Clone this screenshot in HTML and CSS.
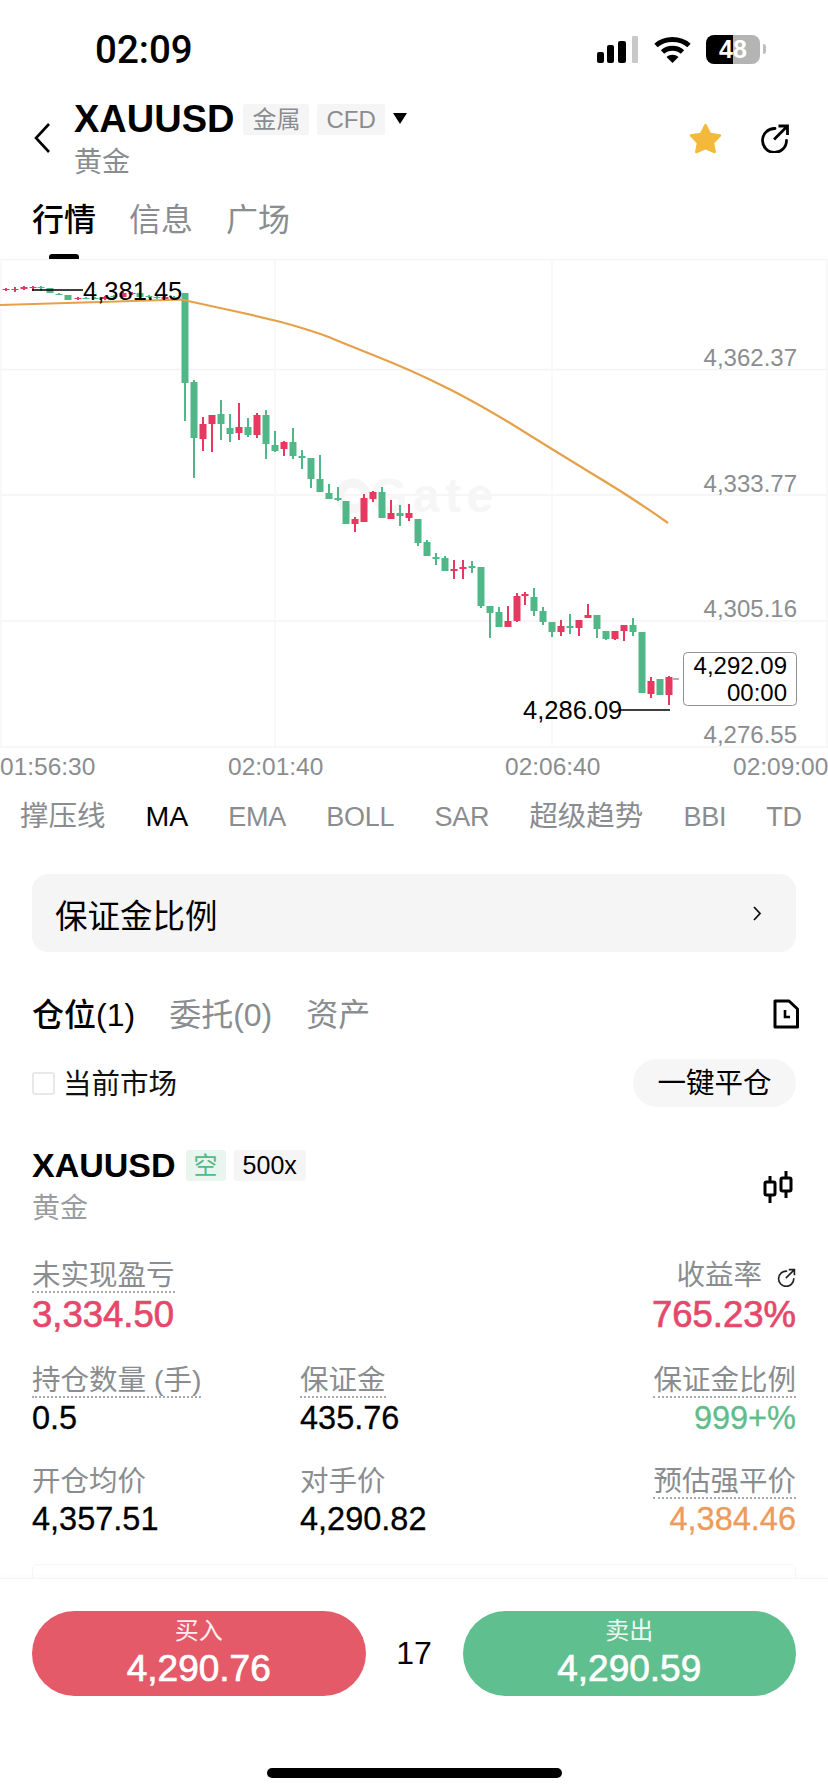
FILE: index.html
```html
<!DOCTYPE html>
<html lang="zh-CN">
<head>
    <meta charset="UTF-8">
    <meta name="viewport" content="width=device-width, initial-scale=1.0">
    <title>XAUUSD</title>
    <link rel="stylesheet" href="styles.css">
</head>
<body>
    <div class="main">
        <!-- Status bar -->
        <div class="status">
            <span class="time">02:09</span>
            <div class="status-icons">
                <svg width="42" height="27" viewBox="0 0 42 27">
                    <rect x="0" y="16" width="7" height="11" rx="2" fill="#000"/>
                    <rect x="10" y="9" width="7" height="18" rx="2" fill="#000"/>
                    <rect x="21" y="5" width="8" height="22" rx="2" fill="#000"/>
                    <rect x="35" y="0" width="6" height="27" rx="1" fill="#c9c9c9"/>
                </svg>
                <svg class="wifi" width="37" height="27" viewBox="0 0 37 27">
                    <path d="M2 9.5 C11 1.5 26 1.5 35 9.5" fill="none" stroke="#000" stroke-width="5"/>
                    <path d="M8.5 16 C14 11 23 11 28.5 16" fill="none" stroke="#000" stroke-width="5"/>
                    <path d="M12.5 21 C16 18 21 18 24.5 21 L18.5 27 Z" fill="#000"/>
                </svg>
                <div class="battery"><span>48</span></div>
                <span class="battery-nub"></span>
            </div>
        </div>

        <!-- Symbol header -->
        <div class="head">
            <svg class="back" width="16" height="30" viewBox="0 0 16 30">
                <path d="M15 1 L2 15 L15 29" fill="none" stroke="#000" stroke-width="2.6"/>
            </svg>
            <div class="head-title">
                <div class="head-row">
                    <span class="symbol">XAUUSD</span>
                    <span class="tag">金属</span>
                    <span class="tag">CFD</span>
                    <svg class="caret" width="14" height="11" viewBox="0 0 14 11"><path d="M0 0 H14 L7 11 Z" fill="#000"/></svg>
                </div>
                <div class="head-sub">黄金</div>
            </div>
            <svg class="star" width="33" height="31" viewBox="0 0 33 31">
                <path d="M16.5 2 L21 11 L31 12.5 L24 20 L25.7 29 L16.5 25 L7.3 29 L9 20 L2 12.5 L12 11 Z" fill="#f4b93a" stroke="#f4b93a" stroke-width="2.5" stroke-linejoin="round"/>
            </svg>
            <svg class="share" width="30" height="29" viewBox="0 0 30 29">
                <path d="M15 4.5 A12 12 0 1 0 26.5 16.5" fill="none" stroke="#000" stroke-width="2.8" stroke-linecap="round"/>
                <path d="M14 15.5 L27 2.5 M18.5 2 H27.5 V11" fill="none" stroke="#000" stroke-width="2.8"/>
            </svg>
        </div>

        <!-- Page tabs -->
        <div class="tabs">
            <div class="tab-row">
                <span class="tab-on">行情</span>
                <span>信息</span>
                <span>广场</span>
            </div>
            <div class="tab-mark"></div>
        </div>

        <!-- Chart: viewBox keeps the page's y values -->
        <svg class="chart" id="chart" width="828" height="527" viewBox="0 259 828 527">
            <g stroke="#f3f3f3" stroke-width="1.5">
                <path d="M0 259.5 H828 M0 369.5 H828 M0 495 H828 M0 621 H828 M0 747 H828"/>
            </g>
            <path d="M1 259 V747 M275 259 V747 M552 259 V747 M827 259 V747" stroke="#f8f8f8" stroke-width="1.5"/>
            <g class="watermark">
                <circle cx="353" cy="496" r="13" fill="none" stroke="#f5f5f5" stroke-width="9"/>
                <text x="370" y="512">Gate</text>
            </g>
            <g id="candles"></g>
            <path d="M0 305 L100 302 L182 299.5 L188 301 L220 308 Q253 315 281 322 Q310 330 326 336 Q343 343 378 357 Q413 371 441 385 Q470 399 510 423 Q550 448 591 473 Q633 498 668 523" fill="none" stroke="#e5a14a" stroke-width="2.2" stroke-linejoin="round"/>
            <path d="M32 290 H83 M619 710 H670" stroke="#000" stroke-width="1.5"/>
            <path d="M673 679 H679" stroke="#999" stroke-width="1.5"/>
            <text class="mark big-mark" x="83" y="300">4,381.45</text>
            <text class="mark big-mark" x="523" y="719">4,286.09</text>
            <g class="axis-y">
                <text x="797" y="366">4,362.37</text>
                <text x="797" y="492">4,333.77</text>
                <text x="797" y="617">4,305.16</text>
                <text x="797" y="743">4,276.55</text>
            </g>
            <rect x="683.5" y="652.5" width="113" height="53" rx="4" fill="#fff" stroke="#8f8f8f" stroke-width="1"/>
            <text class="mark end" x="787" y="674">4,292.09</text>
            <text class="mark end" x="787" y="701">00:00</text>
            <g class="axis-x">
                <text x="0" y="775">01:56:30</text>
                <text x="228" y="775">02:01:40</text>
                <text x="505" y="775">02:06:40</text>
                <text x="733" y="775">02:09:00</text>
            </g>
        </svg>

        <!-- Indicator tabs -->
        <div class="indicators">
            <span class="ind-cjk">撑压线</span>
            <span class="ind-on">MA</span>
            <span>EMA</span>
            <span>BOLL</span>
            <span>SAR</span>
            <span class="ind-cjk">超级趋势</span>
            <span>BBI</span>
            <span>TD</span>
        </div>

        <div class="ratio-card">
            <span>保证金比例</span>
            <svg width="10" height="15" viewBox="0 0 10 15"><path d="M2 1 L8 7.5 L2 14" fill="none" stroke="#111" stroke-width="1.8"/></svg>
        </div>

        <!-- Positions -->
        <div class="pos-tabs">
            <span class="pos-on">仓位(1)</span>
            <span>委托(0)</span>
            <span>资产</span>
            <svg class="doc" width="26" height="30" viewBox="0 0 26 30">
                <path d="M2 2 H16 L24.5 10 V28 H2 Z" fill="none" stroke="#000" stroke-width="3" stroke-linejoin="round"/>
                <path d="M12 11 V18 H17" fill="none" stroke="#000" stroke-width="2.6"/>
            </svg>
        </div>

        <div class="filter">
            <span class="check"></span>
            <span class="filter-text">当前市场</span>
            <span class="close-all">一键平仓</span>
        </div>

        <div class="pos-head">
            <div>
                <div class="pos-row">
                    <span class="pos-symbol">XAUUSD</span>
                    <span class="pos-tag short">空</span>
                    <span class="pos-tag">500x</span>
                </div>
                <div class="pos-sub">黄金</div>
            </div>
            <svg class="kline" width="30" height="32" viewBox="0 0 30 32">
                <path d="M7 5 V32 M23 0 V27" stroke="#000" stroke-width="3"/>
                <rect x="2" y="11" width="10" height="13" rx="1.5" fill="#fff" stroke="#000" stroke-width="3"/>
                <rect x="18" y="7" width="10" height="13" rx="1.5" fill="#fff" stroke="#000" stroke-width="3"/>
            </svg>
        </div>

        <div class="stats">
            <div class="stat wide">
                <span class="stat-label dotted">未实现盈亏</span>
                <div class="stat-value big red">3,334.50</div>
            </div>
            <div class="stat right wide">
                <span class="stat-label">收益率
                    <svg class="mini-share" width="19" height="19" viewBox="0 0 30 29">
                        <path d="M15 4.5 A12 12 0 1 0 26.5 16.5" fill="none" stroke="#222" stroke-width="2.6" stroke-linecap="round"/>
                        <path d="M14 15.5 L27 2.5 M18.5 2 H27.5 V11" fill="none" stroke="#222" stroke-width="2.6"/>
                    </svg>
                </span>
                <div class="stat-value big red">765.23%</div>
            </div>
            <div class="stat">
                <span class="stat-label dotted">持仓数量 (手)</span>
                <div class="stat-value">0.5</div>
            </div>
            <div class="stat">
                <span class="stat-label dotted">保证金</span>
                <div class="stat-value">435.76</div>
            </div>
            <div class="stat right">
                <span class="stat-label dotted">保证金比例</span>
                <div class="stat-value green">999+%</div>
            </div>
            <div class="stat">
                <span class="stat-label">开仓均价</span>
                <div class="stat-value">4,357.51</div>
            </div>
            <div class="stat">
                <span class="stat-label">对手价</span>
                <div class="stat-value">4,290.82</div>
            </div>
            <div class="stat right">
                <span class="stat-label dotted">预估强平价</span>
                <div class="stat-value orange">4,384.46</div>
            </div>
        </div>

        <div class="next-card"></div>
    </div>

    <!-- Buy / sell bar -->
    <div class="trade">
        <div class="trade-row">
            <div class="trade-btn buy">
                <span class="trade-label">买入</span>
                <span class="trade-price">4,290.76</span>
            </div>
            <div class="spread">17</div>
            <div class="trade-btn sell">
                <span class="trade-label">卖出</span>
                <span class="trade-price">4,290.59</span>
            </div>
        </div>
        <div class="home-bar"></div>
    </div>

    <script src="chart.js"></script>
</body>
</html>
```

FILE: styles.css
```css
* {
    box-sizing: border-box;
}

body {
    margin: 0;
    width: 828px;
    height: 1792px;
    display: flex;
    flex-direction: column;
    background: #fff;
    color: #000;
    font-family: "Liberation Sans", "Noto Sans CJK SC", sans-serif;
    overflow: hidden;
}

.main {
    flex: 1;
    min-height: 0;
    overflow: hidden;
}

/* Status bar */
.status {
    height: 98px;
    display: flex;
    align-items: center;
    justify-content: space-between;
    padding: 0 62px 0 95px;
}

.time {
    font-family: Roboto, "Liberation Sans", sans-serif;
    font-size: 38.5px;
    font-weight: 500;
}

.status-icons {
    display: flex;
    align-items: center;
}

.wifi {
    margin-left: 15px;
}

.battery {
    width: 54px;
    height: 29px;
    margin-left: 15px;
    border-radius: 8px;
    background: linear-gradient(90deg, #000 50%, #b4b4b4 50%);
    display: flex;
    align-items: center;
    justify-content: center;
    color: #fff;
    font-size: 25px;
    font-weight: bold;
}

.battery-nub {
    width: 3px;
    height: 10px;
    margin-left: 3px;
    border-radius: 0 3px 3px 0;
    background: #bdbdbd;
}

/* Header */
.head {
    height: 86px;
    display: flex;
    align-items: center;
    padding: 0 38px 0 34px;
}

.back {
    margin: 0 24px 7px 0;
}

.head-title {
    flex: 1;
}

.head-row {
    height: 42px;
    display: flex;
    align-items: center;
}

.symbol {
    font-size: 38px;
    font-weight: bold;
    margin-right: 9px;
}

.tag {
    height: 31px;
    padding: 0 9px;
    margin-right: 8px;
    background: #f5f5f5;
    border-radius: 3px;
    color: #8a8d90;
    font-size: 24px;
    line-height: 31px;
}

.caret {
    margin-bottom: 2px;
}

.head-sub {
    height: 44px;
    color: #8a8d90;
    font-size: 28px;
    line-height: 46px;
}

.star {
    margin: 0 38px 6px 0;
}

.share {
    margin-bottom: 6px;
}

/* Page tabs */
.tabs {
    height: 75px;
    padding-left: 32px;
}

.tab-row {
    height: 70px;
    padding-bottom: 4px;
    display: flex;
    align-items: center;
    gap: 33px;
    color: #8a8d90;
    font-size: 32px;
}

.tab-on {
    color: #000;
    font-weight: 500;
}

.tab-mark {
    width: 30px;
    height: 5px;
    margin-left: 17px;
    background: #000;
    border-radius: 3px 3px 0 0;
}

/* Chart */
.chart {
    display: block;
}

.chart text {
    font-size: 24px;
}

.chart .big-mark {
    font-size: 25.5px;
}

.mark {
    fill: #000;
}

.end {
    text-anchor: end;
}

.axis-y text {
    fill: #8a8d90;
    text-anchor: end;
}

.chart .axis-x text {
    fill: #8a8d90;
    font-size: 24.5px;
}

.chart .watermark text {
    fill: #f6f6f6;
    font-size: 48px;
    font-weight: bold;
    letter-spacing: 5.5px;
}

/* Indicator tabs */
.indicators {
    height: 58px;
    padding-left: 20px;
    display: flex;
    align-items: center;
    gap: 40px;
    color: #8a8d90;
    font-size: 27px;
    letter-spacing: -0.2px;
    white-space: nowrap;
}

.indicators span {
    margin-top: 4px;
}

.indicators .ind-cjk {
    margin: 0 0 4px;
    font-size: 28.5px;
    letter-spacing: 0;
}

.indicators .ind-on {
    margin-top: 2px;
    color: #000;
    font-size: 28.5px;
    letter-spacing: 0;
}

.ratio-card {
    height: 78px;
    margin: 30px 32px 0;
    padding: 0 34px 0 23px;
    display: flex;
    align-items: center;
    justify-content: space-between;
    background: #f5f5f5;
    border-radius: 16px;
    font-size: 32.5px;
}

/* Positions */
.pos-tabs {
    height: 44px;
    margin-top: 40px;
    padding: 0 29px 0 32px;
    display: flex;
    align-items: center;
    gap: 34px;
    color: #8a8d90;
    font-size: 32px;
}

.pos-tabs span {
    margin-bottom: 4px;
}

.pos-on {
    color: #000;
    font-weight: 500;
}

.doc {
    margin-left: auto;
}

.filter {
    height: 48px;
    margin-top: 23px;
    padding: 0 32px;
    display: flex;
    align-items: center;
}

.check {
    width: 23px;
    height: 23px;
    border: 2px solid #e8e8e8;
    border-radius: 3px;
}

.filter-text {
    margin: 0 0 3px 8px;
    font-size: 28.5px;
    color: #111;
}

.close-all {
    margin-left: auto;
    width: 163px;
    height: 48px;
    background: #f6f6f6;
    border-radius: 24px;
    text-align: center;
    font-size: 28.5px;
    line-height: 48px;
}

.pos-head {
    margin-top: 43px;
    padding: 0 35px 0 32px;
    display: flex;
    align-items: center;
    justify-content: space-between;
}

.pos-row {
    height: 31px;
    display: flex;
    align-items: center;
}

.pos-symbol {
    font-size: 34px;
    font-weight: bold;
    margin-right: 10px;
}

.pos-tag {
    height: 31px;
    padding: 0 9px;
    margin-right: 8px;
    background: #f5f5f5;
    border-radius: 3px;
    font-size: 25px;
    line-height: 31px;
}

.pos-tag.short {
    width: 40px;
    padding: 0;
    text-align: center;
    background: #e8f6ef;
    color: #55b889;
    font-size: 24px;
}

.pos-sub {
    height: 40px;
    margin-top: 8px;
    color: #9a9d9f;
    font-size: 28px;
    line-height: 40px;
}

.kline {
    margin-bottom: 6px;
}

.stats {
    margin-top: 28px;
    padding: 0 32px;
    display: grid;
    grid-template-columns: 268px 1fr auto;
    row-gap: 25px;
}

.stat.wide:first-child {
    grid-column: 1 / 3;
}

.stat.right {
    text-align: right;
}

.stat-label {
    display: inline-block;
    height: 36px;
    border-bottom: 2px dotted transparent;
    color: #8a8d90;
    font-size: 28.5px;
    line-height: 36px;
    white-space: nowrap;
}

.stat-label.dotted {
    border-bottom-color: #a8abad;
}

.mini-share {
    margin-left: 7px;
    vertical-align: -2px;
}

.stat-value {
    font-size: 32.5px;
    line-height: 40px;
    white-space: nowrap;
    -webkit-text-stroke: 0.3px;
}

.stat-value.big {
    font-size: 36.5px;
    line-height: 44px;
    -webkit-text-stroke: 0.7px;
}

.red {
    color: #e5486a;
}

.green {
    color: #62bd8c;
}

.orange {
    color: #ee9a5a;
}

.next-card {
    height: 40px;
    margin: 25px 32px 0;
    border: 1.5px solid #f6f6f6;
    border-radius: 6px;
}

/* Buy / sell bar */
.trade {
    height: 214px;
    padding-top: 32px;
    background: #fff;
    border-top: 1px solid #f5f5f5;
    box-shadow: 0 -2px 4px rgba(0, 0, 0, 0.02);
}

.trade-row {
    display: flex;
    padding: 0 32px;
}

.trade-btn {
    flex: 1;
    height: 85px;
    border-radius: 43px;
    display: flex;
    flex-direction: column;
    align-items: center;
    color: #fff;
}

.buy {
    background: #e55a68;
}

.sell {
    background: #5fbf8e;
}

.trade-label {
    margin-top: 4px;
    font-size: 24px;
    line-height: 32px;
    opacity: 0.9;
}

.trade-price {
    font-size: 37px;
    line-height: 44px;
    -webkit-text-stroke: 0.7px;
}

.spread {
    width: 97px;
    text-align: center;
    font-size: 32px;
    line-height: 85px;
}

.home-bar {
    width: 295px;
    height: 10px;
    margin: 72px auto 0;
    background: #000;
    border-radius: 5px;
}
```

FILE: chart.js
```js
// x, wick top, body top, body bottom, wick bottom, colour
var candles = [
    [6, 288, 289, 290, 291, 'r'], [15, 287, 289, 290, 292, 'r'], [24, 286, 287, 289, 290, 'r'], [33, 286, 287, 288, 291, 'r'],
    [41, 286, 287, 288, 291, 'g'], [50, 288, 288, 293, 293, 'g'], [59, 293, 294, 295, 295, 'g'], [68, 295, 295, 300, 300, 'g'],
    [78, 297, 298, 299, 300, 'r'], [86, 297, 298, 299, 299, 'g'], [95, 297, 298, 299, 299, 'g'], [105, 296, 297, 299, 300, 'r'],
    [114, 295, 296, 297, 298, 'g'], [123, 292, 293, 297, 297, 'r'], [132, 292, 293, 294, 295, 'r'], [140, 291, 293, 297, 298, 'g'],
    [149, 295, 296, 297, 298, 'g'], [157, 295, 297, 298, 299, 'g'], [165, 295, 297, 299, 300, 'r'], [174, 296, 297, 298, 299, 'g'],
    [185, 293, 293, 383, 421, 'g'], [194, 380, 382, 438, 478, 'g'], [203, 417, 424, 439, 451, 'r'], [212, 415, 415, 424, 452, 'r'],
    [221, 400, 414, 424, 440, 'g'], [230, 414, 428, 434, 442, 'g'], [239, 403, 427, 433, 440, 'r'], [248, 418, 427, 435, 437, 'g'],
    [257, 413, 415, 435, 438, 'r'], [266, 410, 415, 444, 459, 'g'], [275, 431, 445, 451, 452, 'g'], [284, 441, 442, 449, 456, 'r'],
    [293, 428, 442, 456, 459, 'g'], [302, 450, 456, 458, 469, 'g'], [311, 458, 458, 479, 488, 'g'], [320, 455, 479, 492, 492, 'g'],
    [329, 484, 493, 499, 499, 'g'], [338, 487, 498, 500, 501, 'g'], [346, 501, 501, 524, 524, 'g'], [355, 517, 519, 524, 532, 'r'],
    [364, 494, 498, 522, 522, 'r'], [373, 491, 492, 499, 502, 'r'], [382, 487, 492, 518, 518, 'g'], [391, 500, 513, 519, 519, 'r'],
    [400, 505, 513, 516, 526, 'g'], [409, 504, 513, 518, 521, 'r'], [418, 519, 519, 543, 546, 'g'], [427, 540, 542, 556, 556, 'g'],
    [436, 553, 557, 559, 565, 'g'], [445, 556, 558, 571, 571, 'g'], [454, 560, 569, 571, 579, 'r'], [463, 560, 567, 569, 579, 'r'],
    [472, 561, 566, 568, 573, 'g'], [481, 567, 567, 606, 608, 'g'], [490, 606, 606, 613, 638, 'g'], [499, 607, 612, 627, 627, 'g'],
    [508, 606, 621, 627, 627, 'r'], [517, 593, 596, 621, 622, 'r'], [525, 592, 594, 596, 605, 'r'], [534, 588, 597, 611, 616, 'g'],
    [543, 607, 611, 622, 625, 'g'], [552, 622, 622, 632, 637, 'g'], [561, 620, 626, 632, 636, 'r'], [570, 614, 626, 628, 634, 'g'],
    [579, 620, 620, 628, 636, 'r'], [588, 604, 615, 618, 618, 'r'], [597, 615, 615, 629, 638, 'g'], [606, 631, 631, 639, 640, 'g'],
    [615, 631, 631, 639, 640, 'r'], [624, 625, 625, 631, 641, 'r'], [633, 618, 625, 632, 636, 'g'], [642, 632, 632, 693, 693, 'g'],
    [651, 677, 681, 694, 698, 'r'], [660, 679, 679, 695, 695, 'g'], [669, 676, 677, 695, 705, 'r']
];

var colours = { g: '#52b788', r: '#e6395f' };
var group = document.getElementById('candles');

function addRect(x, y, w, h, fill) {
    var rect = document.createElementNS('http://www.w3.org/2000/svg', 'rect');
    rect.setAttribute('x', x);
    rect.setAttribute('y', y);
    rect.setAttribute('width', w);
    rect.setAttribute('height', h);
    rect.setAttribute('fill', fill);
    group.appendChild(rect);
}

candles.forEach(function (c) {
    var fill = colours[c[5]];
    addRect(c[0] - 1, c[1], 2, c[4] - c[1], fill);
    addRect(c[0] - 3.5, c[2], 7, c[3] - c[2], fill);
});
```
